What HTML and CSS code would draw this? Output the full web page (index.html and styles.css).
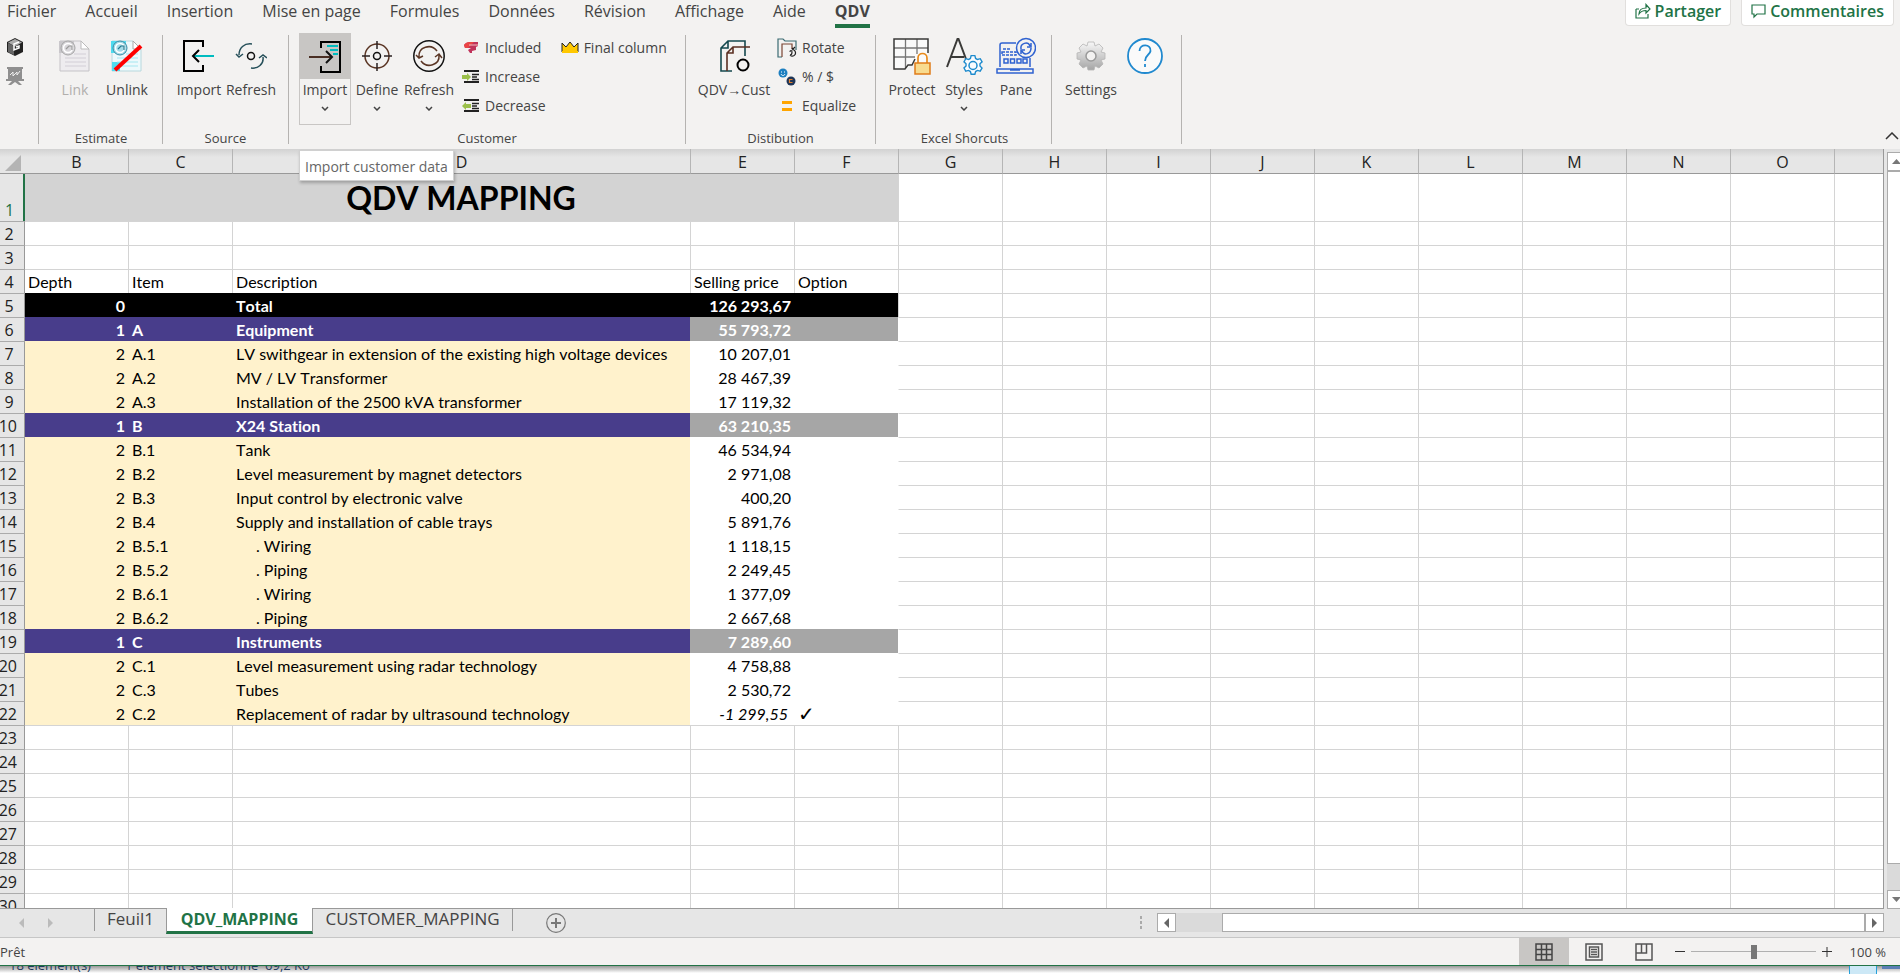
FILE: index.html
```
<!DOCTYPE html>
<html lang="fr">
<head>
  <meta charset="UTF-8" />
  <meta name="viewport" content="width=device-width, initial-scale=1.0"/>
  <title>QDV Mapping</title>
  <link rel="stylesheet" href="styles.css">
</head>
<body>
  <header class="topbar">
    <nav class="menu">
      <a href="#">Fichier</a>
      <a href="#">Accueil</a>
      <a href="#">Insertion</a>
      <a href="#">Mise en page</a>
      <a href="#">Formules</a>
      <a href="#">Données</a>
      <a href="#">Révision</a>
      <a href="#">Affichage</a>
      <a href="#">Aide</a>
      <a href="#" class="active">QDV</a>
    </nav>
    <div class="top-actions">
      <button class="top-btn">
        <svg width="16" height="16" viewBox="0 0 16 16" fill="none" stroke="#217346" stroke-width="1.2">
          <path d="M1 6v9h12v-4M1 6h3M4 11c0-4 3-6 7-6V1.500l4 4.500-4 4V7.500C8 7.500 6 8 4 11z"/>
        </svg>
        Partager
      </button>
      <button class="top-btn">
        <svg width="15" height="16" viewBox="0 0 15 16" fill="none" stroke="#217346" stroke-width="1.2">
          <path d="M1 2h13v9H6l-3 3v-3H1z"/>
        </svg>
        Commentaires
      </button>
    </div>
  </header>

  <section class="ribbon">
    <!-- Quick icons -->
    <div class="group group-quick">
      <button class="quick-btn" aria-label="Cube">
        <svg width="16" height="18" viewBox="0 0 16 18">
          <path d="M8 0l8 4v10l-8 4-8-4V4z" fill="#222"/>
          <path d="M8 1l7 3.500-7 4-7-4z" fill="#aaa"/>
          <path d="M1 5l6 3v9l-6-3z" fill="#666"/>
          <path d="M12 4L7 6v6l5-2V8L9 9" fill="none" stroke="#fff" stroke-width="1.500"/>
        </svg>
      </button>
      <button class="quick-btn" aria-label="Board">
        <svg width="18" height="18" viewBox="0 0 18 18">
          <path d="M1 0h16v2H1zM2 2h14v10H2zM0 12h18v2H0zM6 14l-4 4h3l4-3 4 3h3l-4-4z" fill="#8f8f8f"/>
          <path d="M4 8l3-3v4l4-4v3l3-4" fill="none" stroke="#eee"/>
        </svg>
      </button>
    </div>

    <!-- Estimate -->
    <div class="group group-estimate">
      <div class="group-body">
        <button class="big-btn" disabled>
          <span class="big-icon">
            <svg width="32" height="32" viewBox="0 0 32 32">
              <path d="M1 1h21l8 8v22H1z" fill="#eeecef" stroke="#c5c3c7"/>
              <path d="M22 1v8h8z" fill="#fff" stroke="#bbb"/>
              <path d="M0 1h15v12H0z" fill="#c9c7cb"/>
              <circle cx="9" cy="8" r="7" fill="#d8d6da" stroke="#a5a5a5" />
              <circle cx="9" cy="8" r="4.500" fill="none" stroke="#fff" stroke-width="1.500"/>
              <path d="M7 9l3-3h3v4" fill="none" stroke="#999" stroke-width="1.200"/>
              <path d="M15 14h12M6 18h21M6 22h21M6 26h21" stroke="#d2ced6"/>
            </svg>
          </span>
          <span>Link</span>
        </button>
        <button class="big-btn">
          <span class="big-icon">
            <svg width="32" height="32" viewBox="0 0 32 32">
              <path d="M1 1h21l8 8v22H1z" fill="#eef9fc" stroke="#b8d8de"/>
              <path d="M22 1v8h8z" fill="#fff" stroke="#aaa"/>
              <path d="M0 1h15v12H0zM1 22h8v9H1z" fill="#4fdcf0"/>
              <circle cx="9" cy="8" r="7" fill="#a5dce9" stroke="#3a8ca5"/>
              <circle cx="9" cy="8" r="4.500" fill="none" stroke="#fff" stroke-width="1.500"/>
              <path d="M7 9l3-3h3v4" fill="none" stroke="#27788e" stroke-width="1.200"/>
              <path d="M15 14h12M6 18h21M6 22h21M6 26h21" stroke="#a5e6f0"/>
              <path d="M4 30L30 6" stroke="#f00" stroke-width="4"/>
            </svg>
          </span>
          <span>Unlink</span>
        </button>
      </div>
      <div class="group-label">Estimate</div>
    </div>

    <!-- Source -->
    <div class="group group-source">
      <div class="group-body">
        <button class="big-btn">
          <span class="big-icon">
            <svg width="32" height="32" viewBox="0 0 32 32" fill="none">
              <path d="M20 7V1H1v30h19v-6" stroke="#000" stroke-width="2"/>
              <path d="M31 16H11" stroke="#00bcc0" stroke-width="2"/>
              <path d="M16 10l-6 6 6 6" stroke="#000" stroke-width="2"/>
            </svg>
          </span>
          <span>Import</span>
        </button>
        <button class="big-btn">
          <span class="big-icon">
            <svg width="32" height="32" viewBox="0 0 32 32" fill="none" stroke="#26505a" stroke-width="1.500">
              <path d="M17 4C9 3 4 8 4 15M1 14l3 3 4-3M16 28c7 1 13-4 12-11M24 18l4-3 4 3"/>
              <circle cx="16" cy="16" r="3.500" stroke="#111"/>
            </svg>
          </span>
          <span>Refresh</span>
        </button>
      </div>
      <div class="group-label">Source</div>
    </div>

    <!-- Customer -->
    <div class="group group-customer">
      <div class="group-body">
        <div class="tip-anchor">
          <button class="big-btn hovered" aria-describedby="importTip">
            <span class="big-icon">
              <svg width="32" height="32" viewBox="0 0 32 32" fill="none">
                <path d="M12 7V1h19v30H12v-6" stroke="#000" stroke-width="2"/>
                <path d="M18 5h11M21 9h8M24 13h5" stroke="#00bcc0" stroke-width="2"/>
                <path d="M0 16h22" stroke="#4a2e23" stroke-width="2"/>
                <path d="M17 10l6 6-6 6" stroke="#111" stroke-width="2"/>
              </svg>
            </span>
            <span>Import</span>
            <svg class="chev" width="8" height="5" viewBox="0 0 8 5"><path d="M1 1l3 3 3-3"/></svg>
          </button>
          <div class="tooltip" id="importTip" role="tooltip">Import customer data</div>
        </div>
        <button class="big-btn">
          <span class="big-icon">
            <svg width="32" height="32" viewBox="0 0 32 32" fill="none" stroke="#5a3524" stroke-width="1.500">
              <circle cx="16" cy="16" r="12"/>
              <path d="M16 1v8M16 23v8M1 16h8M23 16h8" stroke="#2b2222"/>
              <circle cx="16" cy="16" r="3.500" stroke="#111"/>
            </svg>
          </span>
          <span>Define</span>
          <svg class="chev" width="8" height="5" viewBox="0 0 8 5"><path d="M1 1l3 3 3-3"/></svg>
        </button>
        <button class="big-btn">
          <span class="big-icon">
            <svg width="32" height="32" viewBox="0 0 32 32" fill="none" stroke="#5a3524" stroke-width="1.500">
              <circle cx="16" cy="16" r="15.200" stroke="#111"/>
              <path d="M6 17C5 7 18 3 24 11M3 15l3 3 4-2M26 15c1 10-12 14-18 6M22 17l4-3 3 4"/>
            </svg>
          </span>
          <span>Refresh</span>
          <svg class="chev" width="8" height="5" viewBox="0 0 8 5"><path d="M1 1l3 3 3-3"/></svg>
        </button>
        <div class="small-list">
          <button class="small-btn">
            <svg width="18" height="16" viewBox="0 0 18 16">
              <path d="M2 5q2-3 6-3h8v4l-2 1v3l-4 1v2H8l-2-3 3-2H3z" fill="#c0335a"/>
              <path d="M2 5q2-3 6-3h4l-6 6H3z" fill="#ea4545"/>
              <path d="M7 5h9" stroke="#f3c0c0"/>
            </svg>
            Included
          </button>
          <button class="small-btn">
            <svg width="18" height="16" viewBox="0 0 18 16">
              <path d="M2 1h15v2H2zM2 12h15v2H2z" fill="#222"/>
              <path d="M10 5.500h7M10 8h5M10 10.500h7" stroke="#222" stroke-width="1.300"/>
              <path d="M0 6h5V4l4 4-4 4v-2H0z" fill="#9bc04a"/>
            </svg>
            Increase
          </button>
          <button class="small-btn">
            <svg width="18" height="16" viewBox="0 0 18 16">
              <path d="M2 1h15v2H2zM2 12h15v2H2z" fill="#222"/>
              <path d="M10 5.500h7M10 8h5M10 10.500h7" stroke="#222" stroke-width="1.300"/>
              <path d="M9 6H4V4L0 8l4 4v-2h5z" fill="#9bc04a"/>
            </svg>
            Decrease
          </button>
        </div>
        <div class="small-list">
          <button class="small-btn">
            <svg width="18" height="16" viewBox="0 0 18 16">
              <path d="M1 12V3l4 4 4-5 4 5 4-4v9" fill="#ffc800" stroke="#222" stroke-width="1"/>
              <path d="M1 12h16" stroke="#ffc800" stroke-width="2"/>
            </svg>
            Final column
          </button>
        </div>
      </div>
      <div class="group-label">Customer</div>
    </div>

    <!-- Distribution -->
    <div class="group group-distrib">
      <div class="group-body">
        <button class="big-btn wide">
          <span class="big-icon">
            <svg width="32" height="34" viewBox="0 0 32 34" fill="none" stroke-width="1.600">
              <path d="M14 32H3V9l7-7h17v15M10 2v7H3" stroke="#14484e"/>
              <path d="M9 32V14l6-6h17M15 8v6H9" stroke="#5a2f22"/>
              <circle cx="25" cy="26" r="5.500" stroke="#000" stroke-width="2"/>
            </svg>
          </span>
          <span>QDV→Cust</span>
        </button>
        <div class="small-list">
          <button class="small-btn">
            <svg width="20" height="20" viewBox="0 0 20 20" fill="none" stroke-width="1.200">
              <path d="M5 19H1V1h5l2 2h11v9" stroke="#3b6b72"/>
              <path d="M5 19V6h10v5" stroke="#7b4432"/>
              <path d="M15 10l3 3c2 4-3 7-5 4M18 9l-3 3M13 14c0-2 2-2 2 0s-1 3-2 3" stroke="#222"/>
            </svg>
            Rotate
          </button>
          <button class="small-btn">
            <svg width="20" height="20" viewBox="0 0 20 20">
              <circle cx="6" cy="6" r="4.500" fill="#1d7fc0"/>
              <path d="M4 5h1M7 5h1M4 7c1 2 3 2 4 0" stroke="#fff" fill="none"/>
              <circle cx="14" cy="14" r="4.500" fill="#1e3557"/>
              <path d="M15.500 12.500h-3v3h3" stroke="#e08030" fill="none" stroke-width="1.200"/>
            </svg>
            % / $
          </button>
          <button class="small-btn">
            <svg width="20" height="20" viewBox="0 0 20 20"><path d="M5 5h10v3H5zM5 12h10v3H5z" fill="#ffa500"/></svg>
            Equalize
          </button>
        </div>
      </div>
      <div class="group-label">Distibution</div>
    </div>

    <!-- Excel shortcuts -->
    <div class="group group-excel">
      <div class="group-body">
        <button class="big-btn">
          <span class="big-icon">
            <svg width="38" height="38" viewBox="0 0 38 38" fill="none">
              <path d="M1 2h34v24H22l-4 1-4 5H1z" fill="#fafafa"/>
              <path d="M12.500 2v29M24 2v15M1 11h34M1 20h21" stroke="#777" stroke-width="1.300"/>
              <path d="M22 22l-3 6h-4l-3 4H1V2h34v14" stroke="#3a3a38" stroke-width="1.500"/>
              <path d="M25 27v-6c0-6 9-6 9 0v6" stroke="#e88a1a" stroke-width="1.700"/>
              <path d="M22 26h15v11H22z" fill="#f8db8f" stroke="#e07c1a" stroke-width="1.500"/>
            </svg>
          </span>
          <span>Protect</span>
        </button>
        <button class="big-btn">
          <span class="big-icon">
            <svg width="38" height="38" viewBox="0 0 38 38" fill="none">
              <path d="M2 30L12.500 2h1L21 22M6 20h13" stroke="#3a3a38" stroke-width="2"/>
              <path d="M26.500 19.500h4l.8 3 2 1.200 3-.9 2 3.400-2.300 2.100v2.400l2.200 2.100-2 3.400-2.900-.8-2 1.200-.8 2.900h-4l-.8-2.900-2-1.200-3 .8-1.900-3.400 2.200-2.100v-2.400l-2.200-2.100 1.900-3.400 3 .9 2-1.200z" transform="translate(1.500 .5) scale(.93)" fill="#fafcfe" stroke="#1e8bcd" stroke-width="1.500"/>
              <circle cx="28" cy="28.500" r="4" stroke="#1e8bcd" stroke-width="1.500"/>
            </svg>
          </span>
          <span>Styles</span>
          <svg class="chev" width="8" height="5" viewBox="0 0 8 5"><path d="M1 1l3 3 3-3"/></svg>
        </button>
        <button class="big-btn">
          <span class="big-icon">
            <svg width="40" height="38" viewBox="0 0 40 38" fill="none" stroke="#2f62d0" stroke-width="1.500">
              <path d="M4 30V8q0-2 2-2h14M34 21v9M1 32h36v4H1zM14 33h10"/>
              <path d="M6 15h14v3H6zM7 12h8" stroke-dasharray="3 1"/>
              <path d="M8 22h4v4H8zM14.500 22h4v4h-4zM21 22h4v4h-4zM27 22h4v4h-4z"/>
              <circle cx="30" cy="11" r="9.500"/>
              <path d="M25 12c-1-6 7-8 9-3M35 6v4h-4M35 11c0 6-7 8-9 3M25 17v-4h4"/>
            </svg>
          </span>
          <span>Pane</span>
        </button>
      </div>
      <div class="group-label">Excel Shorcuts</div>
    </div>

    <!-- Settings / help -->
    <div class="group group-settings">
      <div class="group-body">
        <button class="big-btn">
          <span class="big-icon">
            <svg width="32" height="32" viewBox="0 0 32 32">
              <defs>
                <linearGradient id="gear" x1="0" y1="0" x2="0" y2="1">
                  <stop offset="0" stop-color="#f8f8f8"/>
                  <stop offset="1" stop-color="#a5a5a5"/>
                </linearGradient>
              </defs>
              <path d="M13 2h6l1 4 4-2 4 4-2 4 4 1v6l-4 1 2 4-4 4-4-2-1 4h-6l-1-4-4 2-4-4 2-4-4-1v-6l4-1-2-4 4-4 4 2z" fill="url(#gear)" stroke="#b5b5b5" stroke-width=".8"/>
              <circle cx="16" cy="16" r="5" fill="#f3f2f1" stroke="#999" stroke-width="1.500"/>
            </svg>
          </span>
          <span>Settings</span>
        </button>
        <button class="big-btn" aria-label="Help">
          <span class="big-icon">
            <svg width="36" height="36" viewBox="0 0 36 36" fill="none" stroke="#2089cf" stroke-width="1.800">
              <circle cx="18" cy="18" r="17" fill="#fafafa"/>
              <path d="M12.500 13c0-8 12-7 11 0-.5 4-5.500 4-5.500 10M18 26v3"/>
            </svg>
          </span>
        </button>
      </div>
    </div>
    <button class="collapse-btn" aria-label="Réduire le ruban">
      <svg width="14" height="8" viewBox="0 0 14 8" fill="none" stroke="#333" stroke-width="1.500"><path d="M1 7l6-6 6 6"/></svg>
    </button>
  </section>

  <main class="sheet">
    <div class="grid-wrap">
      <table class="grid">
        <colgroup>
          <col class="c-num"><col class="c-b"><col class="c-std"><col class="c-d">
          <col class="c-std"><col class="c-std"><col class="c-std"><col class="c-std"><col class="c-std">
          <col class="c-std"><col class="c-std"><col class="c-std"><col class="c-std"><col class="c-std"><col class="c-std"><col>
        </colgroup>
        <thead>
          <tr>
            <th class="corner"><svg width="16" height="16" viewBox="0 0 16 16"><path d="M16 0v16H0z" fill="#b4b4b4"/></svg></th>
            <th>B</th><th>C</th><th>D</th><th>E</th><th>F</th><th>G</th><th>H</th><th>I</th><th>J</th><th>K</th><th>L</th><th>M</th><th>N</th><th>O</th><th></th>
          </tr>
        </thead>
        <tbody id="rows"></tbody>
      </table>
    </div>
    <div class="vscroll">
      <button class="scroll-btn" aria-label="Haut"><svg width="9" height="5" viewBox="0 0 9 5"><path d="M0 5L4.500 0 9 5z" fill="#777"/></svg></button>
      <div class="v-thumb"></div>
      <div class="v-track"></div>
      <button class="scroll-btn" aria-label="Bas"><svg width="9" height="5" viewBox="0 0 9 5"><path d="M0 0l4.500 5L9 0z" fill="#777"/></svg></button>
    </div>
  </main>

  <div class="sheetbar">
    <div class="sheet-tabs">
      <div class="tab-arrows">
        <svg width="5" height="10" viewBox="0 0 5 10"><path d="M5 0v10L0 5z" fill="#bbb"/></svg>
        <svg width="5" height="10" viewBox="0 0 5 10"><path d="M0 0v10l5-5z" fill="#bbb"/></svg>
      </div>
      <button class="sheet-tab first">Feuil1</button>
      <button class="sheet-tab active">QDV_MAPPING</button>
      <button class="sheet-tab last">CUSTOMER_MAPPING</button>
      <button class="add-btn" aria-label="Nouvelle feuille">
        <svg width="20" height="20" viewBox="0 0 20 20" fill="none" stroke="#777">
          <circle cx="10" cy="10" r="9.300" stroke-width="1.200"/><path d="M10 5v10M5 10h10" stroke-width="2"/>
        </svg>
      </button>
    </div>
    <div class="hscroll">
      <svg class="dots" width="3" height="14" viewBox="0 0 3 14"><path d="M0 0h2v3H0zM0 5h2v3H0zM0 10h2v3H0z" fill="#aaa"/></svg>
      <button class="scroll-btn" aria-label="Gauche"><svg width="5" height="10" viewBox="0 0 5 10"><path d="M5 0v10L0 5z" fill="#666"/></svg></button>
      <div class="h-track"></div>
      <div class="h-thumb"></div>
      <button class="scroll-btn" aria-label="Droite"><svg width="5" height="10" viewBox="0 0 5 10"><path d="M0 0v10l5-5z" fill="#666"/></svg></button>
    </div>
  </div>

  <footer class="status">
    <span class="ready">Prêt</span>
    <button class="view-btn on" aria-label="Normal">
      <svg width="18" height="18" viewBox="0 0 18 18" fill="none" stroke="#444" stroke-width="1.500"><path d="M1 1h16v16H1zM6.500 1v16M11.500 1v16M1 6.500h16M1 11.500h16"/></svg>
    </button>
    <button class="view-btn" aria-label="Mise en page">
      <svg width="18" height="18" viewBox="0 0 18 18" fill="none" stroke="#555" stroke-width="1.500"><path d="M1 1h16v16H1zM4.500 4h9v10h-9zM6 6.500h6M6 9h6M6 11.500h6"/></svg>
    </button>
    <button class="view-btn" aria-label="Sauts de page">
      <svg width="18" height="18" viewBox="0 0 18 18" fill="none" stroke="#555" stroke-width="1.500"><path d="M1 1h16v16H1zM6.500 1v9M11.500 1v9H1"/></svg>
    </button>
    <button class="zoom-btn" aria-label="Zoom arrière"><svg width="10" height="10" viewBox="0 0 10 10"><path d="M0 4.500h10" stroke="#333"/></svg></button>
    <input class="zoom-range" type="range" min="0" max="100" value="50" aria-label="Zoom">
    <button class="zoom-btn" aria-label="Zoom avant"><svg width="10" height="10" viewBox="0 0 10 10"><path d="M0 4.500h10M5 0v10" stroke="#333"/></svg></button>
    <span class="zoom-value">100 %</span>
  </footer>

  <!-- window lying behind -->
  <div class="behind">
    <span class="behind-item">18 élément(s)</span>
    <span class="behind-item">1 élément sélectionné&nbsp; 69,2 Ko</span>
    <span class="behind-icon"></span>
    <span class="behind-icon-2"></span>
  </div>

  <script>
    // row type, depth, item, description, price, option
    const data = {
      4: ['head', 'Depth', 'Item', 'Description', 'Selling price', 'Option'],
      5: ['total', '0', '', 'Total', '126 293,67', ''],
      6: ['section', '1', 'A', 'Equipment', '55 793,72', ''],
      7: ['item', '2', 'A.1', 'LV swithgear in extension of the existing high voltage devices', '10 207,01', ''],
      8: ['item', '2', 'A.2', 'MV / LV Transformer', '28 467,39', ''],
      9: ['item', '2', 'A.3', 'Installation of the 2500 kVA transformer', '17 119,32', ''],
      10: ['section', '1', 'B', 'X24 Station', '63 210,35', ''],
      11: ['item', '2', 'B.1', 'Tank', '46 534,94', ''],
      12: ['item', '2', 'B.2', 'Level measurement by magnet detectors', '2 971,08', ''],
      13: ['item', '2', 'B.3', 'Input control by electronic valve', '400,20', ''],
      14: ['item', '2', 'B.4', 'Supply and installation of cable trays', '5 891,76', ''],
      15: ['item sub', '2', 'B.5.1', '. Wiring', '1 118,15', ''],
      16: ['item sub', '2', 'B.5.2', '. Piping', '2 249,45', ''],
      17: ['item sub', '2', 'B.6.1', '. Wiring', '1 377,09', ''],
      18: ['item sub', '2', 'B.6.2', '. Piping', '2 667,68', ''],
      19: ['section', '1', 'C', 'Instruments', '7 289,60', ''],
      20: ['item', '2', 'C.1', 'Level measurement using radar technology', '4 758,88', ''],
      21: ['item', '2', 'C.3', 'Tubes', '2 530,72', ''],
      22: ['item option', '2', 'C.2', 'Replacement of radar by ultrasound technology', '-1 299,55', '✓']
    };
    const names = ['depth', 'code', 'desc', 'price', 'opt'];
    const empty = n => '<td></td>'.repeat(n);

    let html = '<tr class="title"><th>1</th><td colspan="5">QDV MAPPING</td>' + empty(10) + '</tr>';
    for (let r = 2; r <= 30; r++) {
      const row = data[r];
      if (row) {
        const cells = names.map((n, i) => `<td class="${n}">${row[i + 1]}</td>`).join('');
        html += `<tr class="${row[0]}"><th>${r}</th>${cells}${empty(10)}</tr>`;
      } else {
        html += `<tr><th>${r}</th>${empty(15)}</tr>`;
      }
    }
    document.getElementById('rows').innerHTML = html;
  </script>
</body>
</html>
```
FILE: styles.css
```
* {
  box-sizing: border-box;
}
body {
  margin: 0;
  height: 100vh;
  display: flex;
  flex-direction: column;
  overflow: hidden;
  font-family: 'Open Sans', 'Noto Sans', sans-serif;
  background: #fff;
  color: #444;
}
button {
  font: inherit;
  color: inherit;
  background: none;
  border: none;
  padding: 0;
  cursor: pointer;
}
svg {
  flex: none;
}

/* menu */
.topbar {
  display: flex;
  justify-content: space-between;
  align-items: flex-start;
  height: 28px;
  padding-right: 6px;
  background: #f3f2f1;
}
.menu {
  display: flex;
  gap: 29px;
  padding-left: 7px;
}
.menu a {
  height: 28px;
  line-height: 22px;
  font-size: 16px;
  color: #444;
  text-decoration: none;
}
.menu .active {
  font-weight: bold;
  border-bottom: 4px solid #217346;
}
.top-actions {
  display: flex;
  gap: 10px;
}
.top-btn {
  display: flex;
  align-items: center;
  gap: 4px;
  height: 26px;
  padding: 0 9px 4px;
  font-size: 16px;
  font-weight: 600;
  color: #217346;
  background: #fff;
  border: 1px solid #e1dfdd;
  border-top: none;
  border-radius: 0 0 4px 4px;
}

/* ribbon */
.ribbon {
  display: flex;
  height: 121px;
  padding: 5px 0 3px;
  background: #f3f2f1;
}
.group {
  display: flex;
  flex-direction: column;
  justify-content: space-between;
  position: relative;
  border-right: 1px solid #b5b3b1;
  margin: 2px 0;
}
.group-body {
  display: flex;
  margin-top: -2px;
}
.group-label {
  text-align: center;
  font-size: 13px;
  line-height: 12px;
}
.group-quick {
  width: 39px;
  justify-content: flex-start;
  align-items: center;
  gap: 11px;
  padding: 3px 8px 0 0;
}
.quick-btn {
  height: 18px;
}
.quick-btn svg {
  display: block;
}
.group-estimate {
  width: 124px;
  padding: 0 9px 0 10px;
}
.group-source {
  width: 126px;
  padding: 0 10px;
}
.group-customer {
  width: 397px;
  padding: 0 10px;
}
.group-distrib {
  width: 190px;
  padding: 0 8px;
}
.group-excel {
  width: 176px;
  padding: 0 8px 0 10px;
}
.group-settings {
  width: 130px;
  padding: 0 9px 0 12px;
}
.big-btn {
  display: flex;
  flex-direction: column;
  align-items: center;
  width: 52px;
  height: 92px;
  font-size: 14px;
  line-height: 22px;
  white-space: nowrap;
}
.group-settings .big-btn {
  width: 54px;
}
.big-btn.wide {
  width: 80px;
}
.big-btn:disabled {
  color: #b1afad;
}
.big-icon {
  display: flex;
  align-items: center;
  justify-content: center;
  width: 100%;
  height: 46px;
}
.hovered {
  border: 1px solid #c8c6c4;
}
.hovered .big-icon {
  height: 45px;
  background: #c8c6c4;
}
.chev {
  margin-top: 5px;
  fill: none;
  stroke: #444;
  stroke-width: 1.5;
}
.tip-anchor {
  position: relative;
}
.tooltip {
  position: absolute;
  top: 117px;
  left: 0;
  z-index: 5;
  padding: 0 5px;
  height: 31px;
  line-height: 31px;
  font-size: 14px;
  white-space: nowrap;
  color: #666;
  background: #fff;
  border: 1px solid #d0d0d0;
  box-shadow: 1px 2px 3px rgba(0, 0, 0, 0.25);
}
.small-list {
  display: flex;
  flex-direction: column;
  margin-left: 7px;
}
.small-list + .small-list {
  margin-left: 15px;
}
.small-btn {
  display: flex;
  align-items: center;
  gap: 5px;
  height: 29px;
  font-size: 14px;
  white-space: nowrap;
}
.group-distrib .small-list {
  margin-left: 3px;
}
.collapse-btn {
  margin: auto 1px 2px auto;
  height: 12px;
  display: flex;
}

/* sheet */
.sheet {
  flex: 1;
  min-height: 0;
  display: flex;
  background: #e6e6e6;
}
.grid-wrap {
  flex: 1;
  overflow: hidden;
  background: #fff;
  border-right: 1px solid #999;
  border-bottom: 1px solid #999;
}
.grid {
  table-layout: fixed;
  width: 100%;
  border-collapse: separate;
  border-spacing: 0;
  font-family: Lato, sans-serif;
  font-size: 16px;
  font-kerning: none;
  font-variant-ligatures: none;
  color: #000;
}
.c-num {
  width: 25px;
}
.c-b {
  width: 103px;
}
.c-std {
  width: 104px;
}
.c-d {
  width: 458px;
}
.grid th {
  padding: 0;
  font-family: 'Open Sans', sans-serif;
  font-size: 16px;
  font-weight: normal;
  color: #222;
  background: #e6e6e6;
}
.grid thead th {
  height: 25px;
  line-height: 22px;
  padding-top: 2px;
  border-bottom: 1px solid #999;
  border-left: 1px solid #b5b5b5;
  background: linear-gradient(#d2d2d2, #e6e6e6 8px);
}
.grid thead .corner {
  text-align: right;
  border-left: none;
  padding: 4px 4px 0 0;
  line-height: 0;
}
.grid thead .corner + th,
.grid tbody th {
  border-left: none;
}
.grid tbody th {
  padding-right: 8px;
  border-top: 1px solid #ababab;
  border-right: 1px solid #999;
  /* two digit numbers run off the left edge */
  direction: rtl;
}
.grid td {
  height: 24px;
  line-height: 22px;
  padding: 1px 3px 0;
  white-space: nowrap;
  border-top: 1px solid #d4d4d4;
  border-left: 1px solid #d4d4d4;
}
.grid th + td {
  border-left: none;
}
.title th,
.title td {
  height: 47px;
  border-top: none !important;
}
.grid .title th {
  vertical-align: bottom;
  color: #217346;
  border-right: 2px solid #217346;
}
.title td[colspan] {
  text-align: center;
  font-size: 32px;
  font-weight: bold;
  line-height: 46px;
  background: #d3d3d3;
  border-right: 1px solid #d3d3d3;
}
.depth, .price {
  text-align: right;
}
.head .depth {
  text-align: left;
}
.head .price {
  text-align: left;
}
.total td:nth-child(-n+6) {
  color: #fff;
  font-weight: bold;
  background: #000;
  border-color: #000;
}
.section td:nth-child(-n+4) {
  color: #fff;
  font-weight: bold;
  background: #483d8b;
  border-color: #483d8b;
}
.section .price,
.section .opt {
  color: #fff;
  font-weight: bold;
  background: #a6a6a6;
  border-color: #a6a6a6 !important;
}
.item td:nth-child(-n+4) {
  background: #fff2cc;
  border-color: #fff2cc;
}
.item .price,
.item .opt {
  border-color: #fff;
}
.item td:nth-child(7),
.section td:nth-child(7) {
  border-left-color: #fff;
}
.sub .desc {
  padding-left: 23px;
}
.option .price {
  font-style: italic;
  padding-right: 6px;
}
.option .opt {
  font-family: 'DejaVu Sans', sans-serif;
  font-size: 20px;
}

/* scroll bars */
.scroll-btn {
  display: flex;
  align-items: center;
  justify-content: center;
  flex: none;
  width: 19px;
  height: 19px;
  background: #fff;
  border: 1px solid #ababab;
}
.vscroll {
  display: flex;
  flex-direction: column;
  width: 16px;
  padding: 3px 0 0 3px;
  overflow: hidden;
}
.v-thumb {
  flex: 27;
  width: 19px;
  background: #fff;
  border: 1px solid #ababab;
}
.v-track {
  flex: 1;
  background: #dadada;
}
.sheetbar {
  display: flex;
  height: 29px;
  background: #e6e6e6;
  border-bottom: 1px solid #c6c6c6;
}
.sheet-tabs {
  display: flex;
  align-items: flex-start;
  flex: 0 0 60%;
}
.tab-arrows {
  display: flex;
  gap: 24px;
  width: 94px;
  padding: 9px 0 0 19px;
}
.sheet-tab {
  height: 22px;
  line-height: 20px;
  padding-bottom: 2px;
  font-size: 17px;
}
.first {
  width: 72px;
  border-left: 1px solid #999;
}
.sheet-tab.active {
  width: 147px;
  height: 26px;
  margin-top: -1px;
  font-size: 16px;
  font-weight: bold;
  color: #217346;
  background: #fff;
  border: 1px solid #999;
  border-top: none;
  border-bottom: 3px solid #217346;
  position: relative;
}
.last {
  width: 200px;
  border-right: 1px solid #999;
}
.add-btn {
  margin: 4px 0 0 33px;
  height: 20px;
}
.add-btn svg {
  display: block;
}
.hscroll {
  display: flex;
  align-items: flex-start;
  flex: 1;
  padding: 4px 16px 0 0;
}
.dots {
  margin: 3px 14px 0 0;
}
.h-track {
  flex: 7;
  height: 19px;
  background: #dadada;
}
.h-thumb {
  flex: 97;
  height: 19px;
  background: #fff;
  border: 1px solid #ababab;
}

/* status */
.status {
  display: flex;
  align-items: center;
  height: 28px;
  padding-right: 14px;
  background: #f3f2f1;
  border-bottom: 1px solid #217346;
  font-size: 13px;
}
.ready {
  margin-right: auto;
}
.view-btn {
  display: flex;
  align-items: center;
  justify-content: center;
  width: 50px;
  height: 27px;
}
.view-btn.on {
  background: #c8c6c4;
}
.zoom-btn {
  display: flex;
  margin: 0 6px;
}
.zoom-range {
  -webkit-appearance: none;
  appearance: none;
  width: 125px;
  height: 16px;
  margin: 0;
  background: linear-gradient(#b0b0b0, #b0b0b0) center / 100% 1px no-repeat;
}
.zoom-range::-webkit-slider-thumb {
  -webkit-appearance: none;
  width: 6px;
  height: 14px;
  background: #777;
}
.zoom-value {
  width: 48px;
  text-align: right;
}
.behind {
  display: flex;
  align-items: flex-end;
  height: 8px;
  padding-left: 9px;
  overflow: hidden;
  font-size: 13px;
  line-height: 12px;
  color: #1e395b;
  background: linear-gradient(#999, #fff 7px);
}
.behind-item {
  width: 116px;
  white-space: nowrap;
  margin-bottom: 3px;
}
.behind-icon {
  width: 28px;
  height: 8px;
  margin-left: auto;
  margin-right: 5px;
  background: #cce8f6;
  border: 1px solid #26a0da;
  border-width: 0 1px;
}
.behind-icon-2 {
  width: 18px;
  height: 3px;
  margin-bottom: 5px;
  background: #5b7fb5;
}
```
